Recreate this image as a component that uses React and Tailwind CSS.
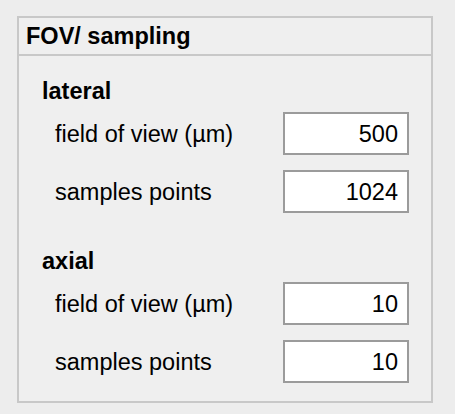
import React from 'react'

const LATERAL = [
  { label: 'field of view (µm)', value: '500' },
  { label: 'samples points', value: '1024' },
]

const AXIAL = [
  { label: 'field of view (µm)', value: '10' },
  { label: 'samples points', value: '10' },
]

function FieldRow({ label, value }) {
  return (
    <div className="flex items-center h-[43px]">
      <span className="w-[264px] pl-[36px] text-[23.5px] leading-[28px] text-black">{label}</span>
      <div className="w-[126px] h-[43px] bg-white border-2 border-[#9b9b9b] flex items-center justify-end pr-[9px] text-[23.5px] leading-[28px] text-black">
        {value}
      </div>
    </div>
  )
}

function Group({ title, rows, className }) {
  return (
    <div className={className}>
      <p className="pl-[23px] text-[23.5px] leading-[28px] font-bold text-black">{title}</p>
      <div className="flex flex-col gap-[15px] mt-[7px]">
        {rows.map((row) => (
          <FieldRow key={row.label} label={row.label} value={row.value} />
        ))}
      </div>
    </div>
  )
}

export default function App() {
  return (
    <div
      className="w-[455px] h-[414px] bg-[#ededed] pt-[16px] pl-[17px]"
      style={{ fontFamily: '"Liberation Sans", Arial, sans-serif' }}
    >
      <div className="w-[416px] h-[387px] border-2 border-[#c8c8c8] bg-[#efefef]">
        <div className="h-[38px] border-b-2 border-[#c8c8c8] pt-[4px] pl-[7px]">
          <p className="text-[23.5px] leading-[28px] font-bold text-black">FOV/ sampling</p>
        </div>
        <Group title="lateral" rows={LATERAL} className="mt-[21px]" />
        <Group title="axial" rows={AXIAL} className="mt-[34px]" />
      </div>
    </div>
  )
}
